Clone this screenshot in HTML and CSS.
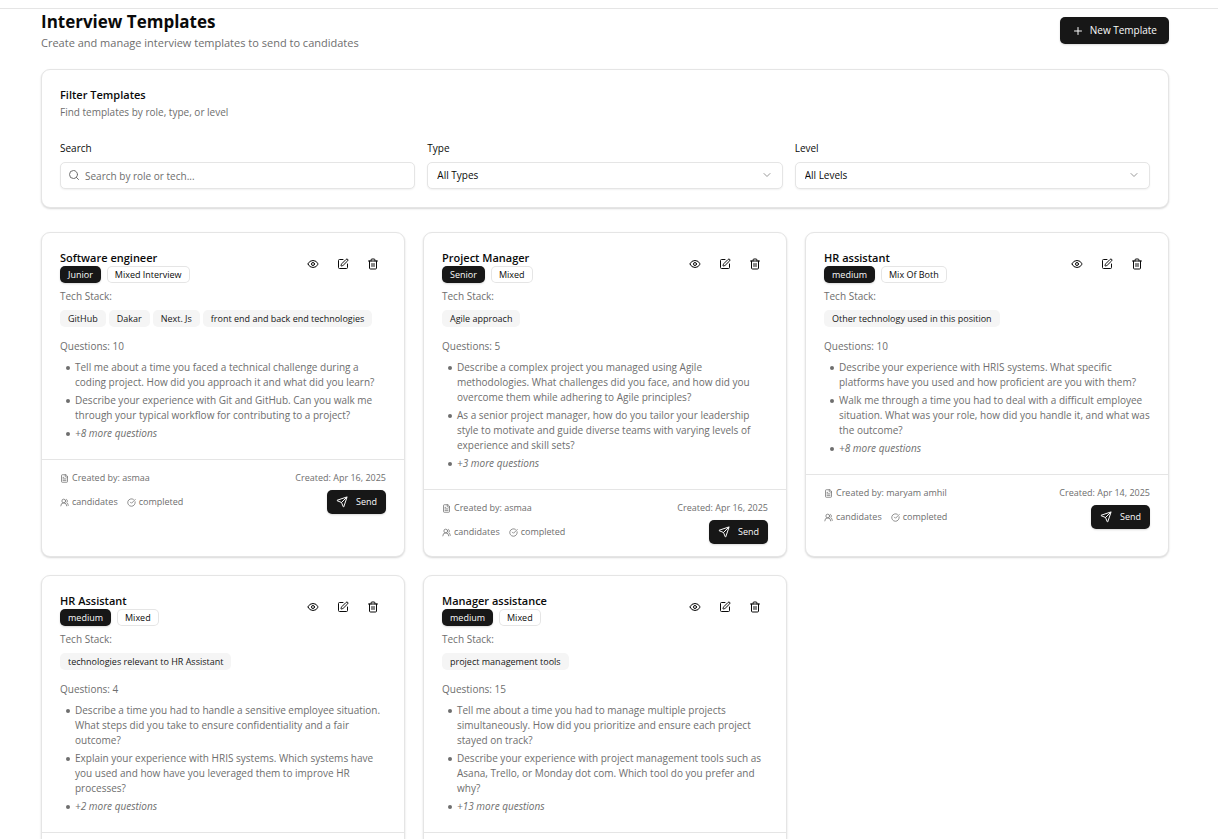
FILE: index.html
```html
<!DOCTYPE html>
<html lang="en">
<head>
<meta charset="utf-8">
<meta name="viewport" content="width=device-width, initial-scale=1">
<title>Interview Templates</title>
<link rel="stylesheet" href="styles.css">
</head>
<body>
<svg class="sprite" aria-hidden="true">
  <symbol id="plus" viewBox="0 0 24 24"><path d="M5 12h14M12 5v14"/></symbol>
  <symbol id="search" viewBox="0 0 24 24"><circle cx="11" cy="11" r="8"/><path d="m21 21-4.3-4.3"/></symbol>
  <symbol id="chevron" viewBox="0 0 24 24"><path d="m6 9 6 6 6-6"/></symbol>
  <symbol id="eye" viewBox="0 0 24 24"><path d="M2.06 12.35a1 1 0 0 1 0-.7 10.75 10.75 0 0 1 19.88 0 1 1 0 0 1 0 .7 10.75 10.75 0 0 1-19.88 0"/><circle cx="12" cy="12" r="3"/></symbol>
  <symbol id="edit" viewBox="0 0 24 24"><path d="M12 3H5a2 2 0 0 0-2 2v14a2 2 0 0 0 2 2h14a2 2 0 0 0 2-2v-7"/><path d="M18.375 2.625a1 1 0 0 1 3 3l-9.013 9.014a2 2 0 0 1-.853.505l-2.873.84a.5.5 0 0 1-.62-.62l.84-2.873a2 2 0 0 1 .506-.852z"/></symbol>
  <symbol id="trash" viewBox="0 0 24 24"><path d="M3 6h18M19 6v14a2 2 0 0 1-2 2H7a2 2 0 0 1-2-2V6M8 6V4a2 2 0 0 1 2-2h4a2 2 0 0 1 2 2v2M10 11v6M14 11v6"/></symbol>
  <symbol id="file" viewBox="0 0 24 24"><path d="M15 2H6a2 2 0 0 0-2 2v16a2 2 0 0 0 2 2h12a2 2 0 0 0 2-2V7zM14 2v4a2 2 0 0 0 2 2h4M10 9H8M16 13H8M16 17H8"/></symbol>
  <symbol id="users" viewBox="0 0 24 24"><path d="M18 21a8 8 0 0 0-16 0"/><circle cx="10" cy="8" r="5"/><path d="M22 20c0-3.370-2-6.500-4-8a5 5 0 0 0-.45-8.300"/></symbol>
  <symbol id="check" viewBox="0 0 24 24"><path d="M21.801 10A10 10 0 1 1 17 3.335"/><path d="m9 11 3 3L22 4"/></symbol>
  <symbol id="send" viewBox="0 0 24 24"><path d="M14.536 21.686a.5.5 0 0 0 .937-.024l6.500-19a.496.496 0 0 0-.635-.635l-19 6.500a.5.5 0 0 0-.024.937l7.930 3.180a2 2 0 0 1 1.112 1.110z"/><path d="m21.854 2.147-10.940 10.939"/></symbol>
</svg>
<div class="topbar"></div>
<main class="page">
  <header class="page-header">
    <div>
      <h1 class="page-title">Interview Templates</h1>
      <p class="page-subtitle">Create and manage interview templates to send to candidates</p>
    </div>
    <button class="button button-new" type="button"><svg class="icon"><use href="#plus"/></svg>New Template</button>
  </header>

  <section class="panel filters">
    <h2 class="panel-title">Filter Templates</h2>
    <p class="panel-text">Find templates by role, type, or level</p>
    <form class="filter-grid">
      <div class="field">
        <label class="label" for="q">Search</label>
        <div class="control">
          <svg class="icon control-search"><use href="#search"/></svg>
          <input class="input input-search" id="q" type="text" placeholder="Search by role or tech...">
        </div>
      </div>
      <div class="field">
        <label class="label" for="type">Type</label>
        <div class="control">
          <select class="input" id="type"><option>All Types</option></select>
          <svg class="icon control-chevron"><use href="#chevron"/></svg>
        </div>
      </div>
      <div class="field">
        <label class="label" for="level">Level</label>
        <div class="control">
          <select class="input" id="level"><option>All Levels</option></select>
          <svg class="icon control-chevron"><use href="#chevron"/></svg>
        </div>
      </div>
    </form>
  </section>

  <section class="cards">
    <article class="panel card">
      <div class="card-body">
        <div class="card-head">
          <div>
            <h2 class="card-title">Software engineer</h2>
            <div class="badges"><span class="badge badge-dark">Junior</span><span class="badge badge-outline">Mixed Interview</span></div>
          </div>
          <div class="actions">
            <button class="icon-button" type="button" aria-label="View"><svg class="icon"><use href="#eye"/></svg></button>
            <button class="icon-button" type="button" aria-label="Edit"><svg class="icon"><use href="#edit"/></svg></button>
            <button class="icon-button" type="button" aria-label="Delete"><svg class="icon"><use href="#trash"/></svg></button>
          </div>
        </div>
        <p class="stack-label">Tech Stack:</p>
        <div class="chips"><span class="badge badge-soft">GitHub</span><span class="badge badge-soft">Dakar</span><span class="badge badge-soft">Next. Js</span><span class="badge badge-soft">front end and back end technologies</span></div>
        <p class="question-count">Questions: 10</p>
        <ul class="questions">
          <li>Tell me about a time you faced a technical challenge during a coding project. How did you approach it and what did you learn?</li>
          <li>Describe your experience with Git and GitHub. Can you walk me through your typical workflow for contributing to a project?</li>
          <li class="more">+8 more questions</li>
        </ul>
      </div>
      <footer class="card-foot">
        <div class="foot-row"><span class="meta"><svg class="icon"><use href="#file"/></svg>Created by: asmaa</span><span>Created: Apr 16, 2025</span></div>
        <div class="foot-row">
          <div class="stats"><span class="meta"><svg class="icon"><use href="#users"/></svg>candidates</span><span class="meta"><svg class="icon"><use href="#check"/></svg>completed</span></div>
          <button class="button button-send" type="button"><svg class="icon"><use href="#send"/></svg>Send</button>
        </div>
      </footer>
    </article>

    <article class="panel card">
      <div class="card-body">
        <div class="card-head">
          <div>
            <h2 class="card-title">Project Manager</h2>
            <div class="badges"><span class="badge badge-dark">Senior</span><span class="badge badge-outline">Mixed</span></div>
          </div>
          <div class="actions">
            <button class="icon-button" type="button" aria-label="View"><svg class="icon"><use href="#eye"/></svg></button>
            <button class="icon-button" type="button" aria-label="Edit"><svg class="icon"><use href="#edit"/></svg></button>
            <button class="icon-button" type="button" aria-label="Delete"><svg class="icon"><use href="#trash"/></svg></button>
          </div>
        </div>
        <p class="stack-label">Tech Stack:</p>
        <div class="chips"><span class="badge badge-soft">Agile approach</span></div>
        <p class="question-count">Questions: 5</p>
        <ul class="questions">
          <li>Describe a complex project you managed using Agile methodologies. What challenges did you face, and how did you overcome them while adhering to Agile principles?</li>
          <li>As a senior project manager, how do you tailor your leadership style to motivate and guide diverse teams with varying levels of experience and skill sets?</li>
          <li class="more">+3 more questions</li>
        </ul>
      </div>
      <footer class="card-foot">
        <div class="foot-row"><span class="meta"><svg class="icon"><use href="#file"/></svg>Created by: asmaa</span><span>Created: Apr 16, 2025</span></div>
        <div class="foot-row">
          <div class="stats"><span class="meta"><svg class="icon"><use href="#users"/></svg>candidates</span><span class="meta"><svg class="icon"><use href="#check"/></svg>completed</span></div>
          <button class="button button-send" type="button"><svg class="icon"><use href="#send"/></svg>Send</button>
        </div>
      </footer>
    </article>

    <article class="panel card">
      <div class="card-body">
        <div class="card-head">
          <div>
            <h2 class="card-title">HR assistant</h2>
            <div class="badges"><span class="badge badge-dark">medium</span><span class="badge badge-outline">Mix Of Both</span></div>
          </div>
          <div class="actions">
            <button class="icon-button" type="button" aria-label="View"><svg class="icon"><use href="#eye"/></svg></button>
            <button class="icon-button" type="button" aria-label="Edit"><svg class="icon"><use href="#edit"/></svg></button>
            <button class="icon-button" type="button" aria-label="Delete"><svg class="icon"><use href="#trash"/></svg></button>
          </div>
        </div>
        <p class="stack-label">Tech Stack:</p>
        <div class="chips"><span class="badge badge-soft">Other technology used in this position</span></div>
        <p class="question-count">Questions: 10</p>
        <ul class="questions">
          <li>Describe your experience with HRIS systems. What specific platforms have you used and how proficient are you with them?</li>
          <li>Walk me through a time you had to deal with a difficult employee situation. What was your role, how did you handle it, and what was the outcome?</li>
          <li class="more">+8 more questions</li>
        </ul>
      </div>
      <footer class="card-foot">
        <div class="foot-row"><span class="meta"><svg class="icon"><use href="#file"/></svg>Created by: maryam amhil</span><span>Created: Apr 14, 2025</span></div>
        <div class="foot-row">
          <div class="stats"><span class="meta"><svg class="icon"><use href="#users"/></svg>candidates</span><span class="meta"><svg class="icon"><use href="#check"/></svg>completed</span></div>
          <button class="button button-send" type="button"><svg class="icon"><use href="#send"/></svg>Send</button>
        </div>
      </footer>
    </article>

    <article class="panel card">
      <div class="card-body">
        <div class="card-head">
          <div>
            <h2 class="card-title">HR Assistant</h2>
            <div class="badges"><span class="badge badge-dark">medium</span><span class="badge badge-outline">Mixed</span></div>
          </div>
          <div class="actions">
            <button class="icon-button" type="button" aria-label="View"><svg class="icon"><use href="#eye"/></svg></button>
            <button class="icon-button" type="button" aria-label="Edit"><svg class="icon"><use href="#edit"/></svg></button>
            <button class="icon-button" type="button" aria-label="Delete"><svg class="icon"><use href="#trash"/></svg></button>
          </div>
        </div>
        <p class="stack-label">Tech Stack:</p>
        <div class="chips"><span class="badge badge-soft">technologies relevant to HR Assistant</span></div>
        <p class="question-count">Questions: 4</p>
        <ul class="questions">
          <li>Describe a time you had to handle a sensitive employee situation. What steps did you take to ensure confidentiality and a fair outcome?</li>
          <li>Explain your experience with HRIS systems. Which systems have you used and how have you leveraged them to improve HR processes?</li>
          <li class="more">+2 more questions</li>
        </ul>
      </div>
      <footer class="card-foot"></footer>
    </article>

    <article class="panel card">
      <div class="card-body">
        <div class="card-head">
          <div>
            <h2 class="card-title">Manager assistance</h2>
            <div class="badges"><span class="badge badge-dark">medium</span><span class="badge badge-outline">Mixed</span></div>
          </div>
          <div class="actions">
            <button class="icon-button" type="button" aria-label="View"><svg class="icon"><use href="#eye"/></svg></button>
            <button class="icon-button" type="button" aria-label="Edit"><svg class="icon"><use href="#edit"/></svg></button>
            <button class="icon-button" type="button" aria-label="Delete"><svg class="icon"><use href="#trash"/></svg></button>
          </div>
        </div>
        <p class="stack-label">Tech Stack:</p>
        <div class="chips"><span class="badge badge-soft">project management tools</span></div>
        <p class="question-count">Questions: 15</p>
        <ul class="questions">
          <li>Tell me about a time you had to manage multiple projects simultaneously. How did you prioritize and ensure each project stayed on track?</li>
          <li>Describe your experience with project management tools such as Asana, Trello, or Monday dot com. Which tool do you prefer and why?</li>
          <li class="more">+13 more questions</li>
        </ul>
      </div>
      <footer class="card-foot"></footer>
    </article>
  </section>
</main>
</body>
</html>
```
FILE: styles.css
```css
:root {
  --ink: #0a0a0a;
  --dark: #171717;
  --muted: #6e6e6e;
  --line: #e5e5e5;
  --soft: #f5f5f5;
}

* { box-sizing: border-box; margin: 0; padding: 0; }

body {
  background: #fff;
  color: var(--ink);
  font: 10px/15px "Segoe UI", "Open Sans", "Noto Sans", sans-serif;
}

button, input, select { font: inherit; color: inherit; }

.sprite { display: none; }

.icon {
  width: 12px;
  height: 12px;
  flex: none;
  fill: none;
  stroke: currentColor;
  stroke-width: 2;
  stroke-linecap: round;
  stroke-linejoin: round;
}

.topbar { height: 9px; border-bottom: 1px solid var(--line); }

.page { padding: 0 49px 18px 41px; }

.page-header {
  display: flex;
  justify-content: space-between;
  align-items: center;
  margin-bottom: 17px;
}
.page-title { font-size: 17px; line-height: 25px; font-weight: 700; }
.page-subtitle { font-size: 11px; line-height: 18px; color: var(--muted); }

.button {
  display: flex;
  align-items: center;
  justify-content: center;
  border: 0;
  border-radius: 5px;
  background: var(--dark);
  color: #fafafa;
  box-shadow: 0 1px 2px rgba(0, 0, 0, 0.15);
}
.button-new { height: 27px; padding: 0 12px; gap: 6px; }
.button-send { height: 24px; padding: 0 9px; gap: 8px; font-size: 9px; }

.panel {
  border: 1px solid var(--line);
  border-radius: 9px;
  background: #fff;
  box-shadow: 0 1px 2px rgba(0, 0, 0, 0.16);
}

.filters { padding: 18px; margin-bottom: 24px; }
.panel-title { font-size: 11px; line-height: 14px; font-weight: 600; }
.panel-text { margin-top: 3px; color: var(--muted); }

.filter-grid {
  display: grid;
  grid-template-columns: repeat(3, 1fr);
  gap: 12px;
  margin-top: 18px;
}
.label { display: block; line-height: 20px; margin-bottom: 4px; }
.control { position: relative; }
.input {
  display: block;
  width: 100%;
  height: 27px;
  padding: 0 9px;
  border: 1px solid var(--line);
  border-radius: 5px;
  background: #fff;
  box-shadow: 0 1px 2px rgba(0, 0, 0, 0.06);
  appearance: none;
}
.input-search { padding-left: 24px; }
.input::placeholder { color: var(--muted); opacity: 1; }
.control-search { position: absolute; left: 8px; top: 7px; color: var(--muted); }
.control-chevron { position: absolute; right: 10px; top: 7px; color: #999; }

.cards {
  display: grid;
  grid-template-columns: repeat(3, 1fr);
  gap: 18px;
}
.card-body { padding: 17px 18px 18px; }
.card-head { display: flex; justify-content: space-between; align-items: flex-start; }
.card-title { margin-bottom: 1px; font-size: 11px; line-height: 15px; font-weight: 600; }
.badges { display: flex; gap: 6px; }
.badge {
  padding: 0 8px;
  border-radius: 5px;
  font-size: 9px;
  line-height: 17px;
  font-weight: 500;
}
.badge-dark { background: var(--dark); color: #fafafa; box-shadow: 0 1px 2px rgba(0, 0, 0, 0.15); }
.badge-outline { box-shadow: inset 0 0 0 1px var(--line); }
.badge-soft { background: var(--soft); color: var(--dark); }

.actions { display: flex; gap: 3px; }
.icon-button {
  display: grid;
  place-items: center;
  width: 27px;
  height: 27px;
  border: 0;
  background: none;
}

.stack-label { margin-top: 6px; color: var(--muted); }
.chips { display: flex; flex-wrap: wrap; gap: 3px; margin-top: 6px; }
.question-count { margin-top: 12px; color: var(--muted); }
.questions {
  display: grid;
  gap: 3px;
  margin-top: 6px;
  padding-left: 15px;
  color: var(--muted);
  list-style: none;
}
.questions li { position: relative; }
.questions li::before {
  content: "";
  position: absolute;
  left: -9px;
  top: 6px;
  width: 4px;
  height: 4px;
  border-radius: 50%;
  background: currentColor;
}
.more { font-style: italic; }

.card-foot {
  display: grid;
  gap: 6px;
  padding: 12px 18px;
  border-top: 1px solid var(--line);
  color: var(--muted);
  font-size: 9px;
  line-height: 12px;
}
.foot-row { display: flex; justify-content: space-between; align-items: center; }
.stats { display: flex; gap: 9px; }
.meta { display: flex; align-items: center; gap: 3px; }
.meta .icon { width: 9px; height: 9px; }
```
